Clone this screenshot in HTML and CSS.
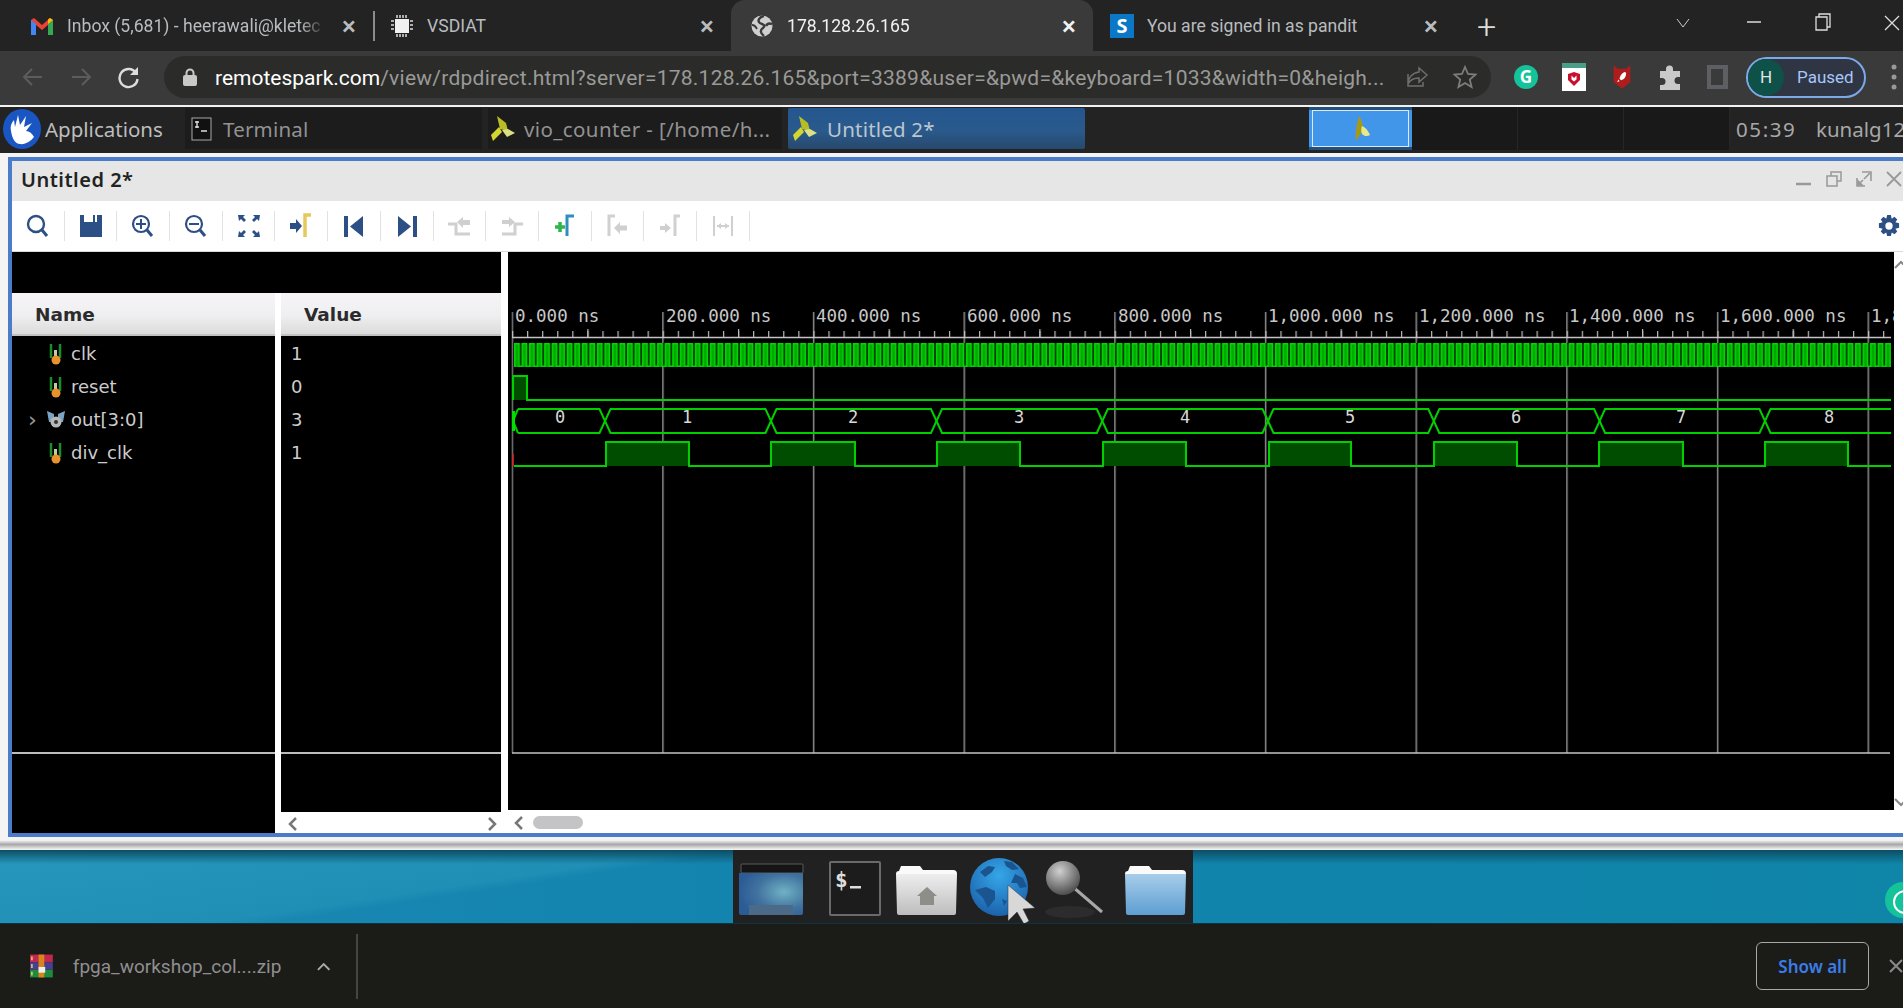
FILE: index.html
```html
<!DOCTYPE html>
<html lang="en">
<head>
    <meta charset="UTF-8">
    <title>178.128.26.165</title>
    <link rel="stylesheet" href="styles.css">
</head>
<body>
    <!-- browser tabs -->
    <div class="tabstrip">
        <div class="tab tab-first">
            <svg class="fav" viewBox="0 0 24 18"><path d="M1 18V3l3-2 8 7 8-7 3 2v15h-5V8l-6 5-6-5v10z" fill="#ea4335"/><path d="M1 18V3l5 4v11z" fill="#4285f4"/><path d="M23 18V3l-5 4v11z" fill="#34a853"/><path d="M18 7l5-4-3-2-2 1.500z" fill="#fbbc04"/></svg>
            <span class="tab-title">Inbox (5,681) - heerawali@kletec</span>
            <span class="tab-close">×</span>
        </div>
        <div class="tab-sep"></div>
        <div class="tab tab-plain">
            <svg class="fav" viewBox="0 0 24 24"><rect x="5" y="5" width="14" height="14" fill="#f1f1f1"/><path d="M7 1v3M10 1v3M13 1v3M16 1v3M7 20v3M10 20v3M13 20v3M16 20v3M1 7h3M1 11h3M1 15h3M20 7h3M20 11h3M20 15h3" stroke="#ddd" stroke-width="1.500"/></svg>
            <span class="tab-title">VSDIAT</span>
            <span class="tab-close">×</span>
        </div>
        <div class="tab tab-first tab-active">
            <svg class="fav" viewBox="0 0 24 24"><circle cx="12" cy="12" r="10.500" fill="#cfcfcf"/><path d="M14 2C9 3 7 7 10 9c4 2 6 2 3 5-3 2-3 5 1 8" fill="none" stroke="#3a3a3a" stroke-width="2.400"/><path d="M22 10c-3-1-5 0-6 2" fill="none" stroke="#3a3a3a" stroke-width="2.400"/><path d="M2 11c3 0 4 2 5 4" fill="none" stroke="#3a3a3a" stroke-width="1.800"/></svg>
            <span class="tab-title">178.128.26.165</span>
            <span class="tab-close">×</span>
        </div>
        <div class="tab tab-plain tab-last">
            <span class="fav-s">S</span>
            <span class="tab-title">You are signed in as pandit</span>
            <span class="tab-close">×</span>
        </div>
        <span class="new-tab">+</span>
        <div class="win-btns">
            <svg class="win-chevron" width="14" height="10" viewBox="0 0 14 10"><path d="M1 1l6 8 6-8" fill="none" stroke="#ccc"/></svg>
            <svg class="win-min" width="14" height="4" viewBox="0 0 14 4"><path d="M0 2h14" stroke="#ddd" stroke-width="1.500"/></svg>
            <svg class="win-restore" width="16" height="18" viewBox="0 0 16 18"><path d="M4 4V1h11v13h-3M1 4h11v13H1z" fill="none" stroke="#ddd" stroke-width="1.300"/></svg>
            <svg class="win-close" width="16" height="16" viewBox="0 0 16 16"><path d="M1 1l14 14M15 1L1 15" stroke="#ddd" stroke-width="1.300"/></svg>
        </div>
    </div>

    <!-- address bar row -->
    <div class="toolbar">
        <svg class="nav" width="24" height="24" viewBox="0 0 24 24"><path d="M21 12H4M11 4l-8 8 8 8" fill="none" stroke="#5c5c5c" stroke-width="2"/></svg>
        <svg class="nav" width="24" height="24" viewBox="0 0 24 24"><path d="M3 12h17M13 4l8 8-8 8" fill="none" stroke="#5c5c5c" stroke-width="2"/></svg>
        <svg class="nav" width="24" height="24" viewBox="0 0 24 24"><path d="M19 8a9 9 0 1 0 1.500 6" fill="none" stroke="#dcdcdc" stroke-width="2.400"/><path d="M21 2v8h-8z" fill="#dcdcdc"/></svg>
        <div class="address">
            <svg class="lock" width="14" height="18" viewBox="0 0 14 18"><rect x="0" y="7" width="14" height="11" rx="2" fill="#c8c8c8"/><path d="M3.500 8V5a3.500 3.500 0 0 1 7 0v3" fill="none" stroke="#c8c8c8" stroke-width="2"/></svg>
            <span class="url"><span class="url-host">remotespark.com</span>/view/rdpdirect.html?server=178.128.26.165&amp;port=3389&amp;user=&amp;pwd=&amp;keyboard=1033&amp;width=0&amp;heigh...</span>
            <svg class="share" width="24" height="24" viewBox="0 0 24 24"><path d="M14 3l8 7-8 7v-4c-5 0-9 2-11 6 0-6 4-11 11-12zM3 9v12h15v-4" fill="none" stroke="#6e6e6e" stroke-width="1.500"/></svg>
            <svg class="star" width="24" height="24" viewBox="0 0 24 24"><path d="M12 2l3 7 7.500.6-5.700 5 1.800 7.400L12 18l-6.600 4 1.800-7.400-5.700-5L9 9z" fill="none" stroke="#7d7d7d" stroke-width="1.800"/></svg>
        </div>
        <span class="ext-grammarly">G</span>
        <svg class="ext" width="24" height="28" viewBox="0 0 24 28"><rect width="24" height="28" fill="#fff"/><rect width="24" height="5" fill="#4a9d86"/><path d="M6 11l6-2 6 2v6l-6 6-6-6z" fill="#c8102e"/><path d="M9.500 12.500v4l2.500 2 2.500-2v-4l-2.500 2.500z" fill="#fff"/></svg>
        <svg class="ext ext-rocket" width="20" height="26" viewBox="0 0 24 30"><path d="M2 1l5 4h10l5-4v20l-10 8-10-8z" fill="#b01c1c"/><path d="M15 9c-3 1-5 4-6 8l2 2c4-1 6-4 6-9zM8 18l-2 3 3-1z" fill="#fff"/></svg>
        <svg class="ext" width="24" height="26" viewBox="0 0 24 26"><path d="M2 7h6V5a3.500 3.500 0 0 1 7 0v2h7v6h-2a3.500 3.500 0 0 0 0 7h2v6H2v-5h2a3.500 3.500 0 0 0 0-7H2z" fill="#c9c9c9"/></svg>
        <svg class="ext" width="24" height="26" viewBox="0 0 24 26"><rect x="1" y="1" width="21" height="24" fill="#5d5f62"/><rect x="5" y="5" width="12" height="16" fill="#3a3a3a"/></svg>
        <div class="profile"><span class="avatar">H</span><span class="paused">Paused</span></div>
        <svg class="dots" width="6" height="26" viewBox="0 0 6 26"><circle cx="3" cy="3" r="2.500" fill="#999"/><circle cx="3" cy="13" r="2.500" fill="#999"/><circle cx="3" cy="23" r="2.500" fill="#999"/></svg>
    </div>

    <!-- remote desktop panel -->
    <div class="panel">
        <svg class="xfce" width="38" height="40" viewBox="0 0 38 40"><ellipse cx="19" cy="20" rx="19" ry="20" fill="#1a55c4"/><path d="M8 22c-1-4 0-8 3-11l1 7 3-12 2 10 6-9-2 11 8-4-6 8c3 0 6 2 8 6-3 4-9 8-14 7-5 0-8-6-9-13z" fill="#fff"/></svg>
        <span class="app-menu">Applications</span>
        <div class="task">
            <svg class="task-term" width="21" height="24" viewBox="0 0 21 24"><rect x="1" y="1" width="19" height="22" fill="#111" stroke="#aaa"/><path d="M4 5h4M6 4v7M4 10h4M10 14h6" stroke="#ddd" stroke-width="1.400"/></svg>
            <span>Terminal</span>
        </div>
        <div class="task task-vio">
            <svg class="vivado" width="26" height="28" viewBox="0 0 26 28"><path d="M7 1l9 7 2 8-8-2z" fill="#b9bd24"/><path d="M9 12l3 5-9 9-2-6z" fill="#d3d62e"/><path d="M12 15l6-1 7 4-8 4z" fill="#dcdf82"/></svg>
            <span>vio_counter - [/home/h...</span>
        </div>
        <div class="task task-active">
            <svg class="vivado" width="26" height="28" viewBox="0 0 26 28"><path d="M7 1l9 7 2 8-8-2z" fill="#b9bd24"/><path d="M9 12l3 5-9 9-2-6z" fill="#d3d62e"/><path d="M12 15l6-1 7 4-8 4z" fill="#dcdf82"/></svg>
            <span>Untitled 2*</span>
        </div>
        <div class="pager">
            <div class="pager-on">
                <svg width="26" height="28" viewBox="0 0 26 28"><path d="M11 1c3 4 4 9 4 14l-7 11c-1-5 0-15 3-25z" fill="#a49a18"/><path d="M14 11c3 1 6 4 8 9-3 2-6 1-8-1-1-3-1-5 0-8z" fill="#e9e98a"/></svg>
            </div>
            <div class="pager-cell"></div>
            <div class="pager-cell"></div>
            <div class="pager-cell"></div>
        </div>
        <span class="clock">05:39</span>
        <span class="user">kunalg12</span>
    </div>

    <!-- desktop with the waveform window -->
    <div class="desktop">
        <div class="window">
            <div class="window-inner">
                <div class="titlebar">
                    <span class="title">Untitled 2*</span>
                    <div class="title-btns">
                        <svg width="16" height="16" viewBox="0 0 16 16"><path d="M0 13h15" stroke="#999" stroke-width="2.500"/></svg>
                        <svg width="16" height="16" viewBox="0 0 16 16"><path d="M5 5V1h10v9h-4M1 5h10v10H1z" fill="none" stroke="#999" stroke-width="1.500"/></svg>
                        <svg width="16" height="16" viewBox="0 0 16 16"><path d="M6 1h9v9M1 7v8h8" fill="none" stroke="#999" stroke-width="1.600"/><path d="M2 14l5-5M2 14v-4l4 4zM14 2l-6 6" stroke="#999" stroke-width="1.600" fill="#999"/></svg>
                        <svg width="16" height="16" viewBox="0 0 16 16"><path d="M1 1l14 14M15 1L1 15" stroke="#999" stroke-width="1.800"/></svg>
                    </div>
                </div>

                <div class="tools">
                    <div class="tool"><svg width="24" height="26" viewBox="0 0 24 26"><circle cx="10" cy="11" r="8" fill="none" stroke="#2c4f85" stroke-width="2.400"/><path d="M16 17l5 6" stroke="#2c4f85" stroke-width="3"/></svg></div>
                    <div class="tool"><svg width="24" height="26" viewBox="0 0 24 26"><path d="M1 2h4v7h9V2h2v7h2V2h5v22H1z" fill="#2c4f85"/></svg></div>
                    <div class="tool"><svg width="24" height="26" viewBox="0 0 24 26"><circle cx="10" cy="11" r="8" fill="none" stroke="#2c4f85" stroke-width="2.200"/><path d="M10 6v10M5 11h10" stroke="#2c4f85" stroke-width="2"/><path d="M16 17l5 6" stroke="#2c4f85" stroke-width="3"/></svg></div>
                    <div class="tool"><svg width="24" height="26" viewBox="0 0 24 26"><circle cx="10" cy="11" r="8" fill="none" stroke="#2c4f85" stroke-width="2.200"/><path d="M5 11h10" stroke="#2c4f85" stroke-width="2"/><path d="M16 17l5 6" stroke="#2c4f85" stroke-width="3"/></svg></div>
                    <div class="tool"><svg width="24" height="26" viewBox="0 0 24 26" fill="#2c4f85"><path d="M1 2h7L6 4l3 3-2 2-3-3-2 2zM23 2h-7l2 2-3 3 2 2 3-3 2 2zM1 24h7l-2-2 3-3-2-2-3 3-2-2zM23 24h-7l2-2-3-3 2-2 3 3 2-2z"/></svg></div>
                    <div class="tool"><svg width="24" height="26" viewBox="0 0 24 26"><path d="M1 10h6V6l6 7-6 7v-4H1z" fill="#2c4f85"/><path d="M22 2h-6v22" fill="none" stroke="#e6c95c" stroke-width="3.500"/></svg></div>
                    <div class="tool"><svg width="24" height="26" viewBox="0 0 24 26" fill="#2c4f85"><rect x="2" y="3" width="4" height="21"/><path d="M21 3v21L8 13.500z"/></svg></div>
                    <div class="tool"><svg width="24" height="26" viewBox="0 0 24 26" fill="#2c4f85"><rect x="18" y="3" width="4" height="21"/><path d="M3 3v21l13-10.500z"/></svg></div>
                    <div class="tool"><svg width="24" height="26" viewBox="0 0 24 26"><path d="M1 11H9V21H23" fill="none" stroke="#d0d0d0" stroke-width="3"/><path d="M10 9l6-5v3h7v5h-7v3z" fill="#cfcfcf"/></svg></div>
                    <div class="tool"><svg width="24" height="26" viewBox="0 0 24 26"><path d="M2 21H15V11H23" fill="none" stroke="#d0d0d0" stroke-width="3"/><path d="M2 7h7V4l6 5-6 5v-3H2z" fill="#cfcfcf"/></svg></div>
                    <div class="tool"><svg width="24" height="26" viewBox="0 0 24 26"><path d="M2 14h10M7 9v10" stroke="#2fb54a" stroke-width="3.500"/><path d="M21 3h-7v20" fill="none" stroke="#2f8dc0" stroke-width="3"/></svg></div>
                    <div class="tool"><svg width="24" height="26" viewBox="0 0 24 26"><path d="M10 3H4v20" fill="none" stroke="#d0d0d0" stroke-width="3"/><path d="M9 15l6-6v3.500h7v5h-7V21z" fill="#cfcfcf"/></svg></div>
                    <div class="tool"><svg width="24" height="26" viewBox="0 0 24 26"><path d="M22 3H17V23" fill="none" stroke="#d0d0d0" stroke-width="3"/><path d="M2 13h5V10l6 5-6 5v-3H2z" fill="#cfcfcf"/></svg></div>
                    <div class="tool"><svg width="24" height="26" viewBox="0 0 24 26"><path d="M3 3v20M21 3v20M6 13h12" stroke="#d0d0d0" stroke-width="2"/><path d="M6 13l4-3v6zM18 13l-4-3v6z" fill="#d0d0d0"/></svg></div>
                    <svg class="gear" width="22" height="24" viewBox="0 0 24 24"><path fill="#2c4f85" fill-rule="evenodd" d="M10 0h4l1 4 3-2 3 3-2 3 4 1v5l-4 1 2 3-3 3-3-2-1 4h-4l-1-4-3 2-3-3 2-3-4-1V9l4-1-2-3 3-3 3 2zM12 8a4 4 0 1 0 0 8 4 4 0 0 0 0-8z"/></svg>
                </div>

                <div class="panes">
                    <div class="name-pane">
                        <div class="pane-top pane-top-join"></div>
                        <div class="col-head col-name">Name</div>
                        <div class="rows">
                            <div class="row"><svg class="sig" width="16" height="24" viewBox="0 0 16 24"><path d="M3 2v14M12 2v14" stroke="#1e8a2e" stroke-width="2.500"/><path d="M6 8h3v8H6z" fill="#c9c9a0"/><circle cx="8" cy="18" r="4.500" fill="#e8912d"/></svg>clk</div>
                            <div class="row"><svg class="sig" width="16" height="24" viewBox="0 0 16 24"><path d="M3 2v14M12 2v14" stroke="#1e8a2e" stroke-width="2.500"/><path d="M6 8h3v8H6z" fill="#c9c9a0"/><circle cx="8" cy="18" r="4.500" fill="#e8912d"/></svg>reset</div>
                            <div class="row row-bus"><span class="expander">›</span><svg class="sig" width="20" height="20" viewBox="0 0 20 20"><path d="M1 1l7 3v8H3zM19 1l-7 3v8h5z" fill="#7da3c4"/><circle cx="10" cy="12" r="5.500" fill="#b8b8b8"/><circle cx="10" cy="12" r="2" fill="#333"/></svg>out[3:0]</div>
                            <div class="row"><svg class="sig" width="16" height="24" viewBox="0 0 16 24"><path d="M3 2v14M12 2v14" stroke="#1e8a2e" stroke-width="2.500"/><path d="M6 8h3v8H6z" fill="#c9c9a0"/><circle cx="8" cy="18" r="4.500" fill="#e8912d"/></svg>div_clk</div>
                        </div>
                        <div class="pane-rule"></div>
                    </div>

                    <div class="value-pane">
                        <div class="value-black">
                            <div class="pane-top"></div>
                            <div class="col-head col-value">Value</div>
                            <div class="rows">
                                <div class="row">1</div>
                                <div class="row">0</div>
                                <div class="row">3</div>
                                <div class="row">1</div>
                            </div>
                            <div class="pane-rule pane-rule-short"></div>
                        </div>
                        <div class="hscroll">
                            <svg width="12" height="16" viewBox="0 0 12 16"><path d="M9 2L3 8l6 6" fill="none" stroke="#777" stroke-width="2.500"/></svg>
                            <svg width="12" height="16" viewBox="0 0 12 16"><path d="M3 2l6 6-6 6" fill="none" stroke="#777" stroke-width="2.500"/></svg>
                        </div>
                    </div>

                    <div class="wave-pane">
                        <svg class="wave" width="1386" height="558" viewBox="508 252 1386 558">
                            <defs>
                                <pattern id="grid" patternUnits="userSpaceOnUse" x="511.5" y="0" width="150.67" height="10"><rect width="1.500" height="10" fill="#8c8c8c"/></pattern>
                                <pattern id="minor" patternUnits="userSpaceOnUse" x="512" y="331" width="15.067" height="6"><rect width="1.200" height="6" fill="#bdbdbd"/></pattern>
                                <pattern id="mid" patternUnits="userSpaceOnUse" x="587.3" y="329" width="150.67" height="8"><rect width="1.200" height="8" fill="#bdbdbd"/></pattern>
                                <pattern id="clock" patternUnits="userSpaceOnUse" x="514" y="343" width="7.534" height="24">
                                    <rect width="7.534" height="23" fill="#003a00"/>
                                    <rect width="5.200" height="24" fill="#00a800"/>
                                    <path d="M0 23.200H0.800V0.800H5V23.200H7.534" fill="none" stroke="#00d800" stroke-width="1.500"/>
                                </pattern>
                            </defs>
                            <rect x="511.500" y="312" width="1380" height="441" fill="url(#grid)"/>
                            <rect x="512" y="331" width="1379" height="6" fill="url(#minor)"/>
                            <rect x="512" y="329" width="1379" height="8" fill="url(#mid)"/>
                            <path d="M512 337.500H1891M512 753H1890" stroke="#c4c4c4" stroke-width="1.500"/>
                            <g class="ruler">
                                <text x="515" y="322">0.000 ns</text>
                                <text x="666" y="322">200.000 ns</text>
                                <text x="816" y="322">400.000 ns</text>
                                <text x="967" y="322">600.000 ns</text>
                                <text x="1118" y="322">800.000 ns</text>
                                <text x="1268" y="322">1,000.000 ns</text>
                                <text x="1419" y="322">1,200.000 ns</text>
                                <text x="1569" y="322">1,400.000 ns</text>
                                <text x="1720" y="322">1,600.000 ns</text>
                                <text x="1871" y="322">1,800.000 ns</text>
                            </g>
                            <rect x="514" y="343" width="1377" height="24" fill="url(#clock)"/>
                            <path class="trace" d="M513 400V376H527V400H1891" fill="#004d00"/>
                            <path class="trace" fill="none" d="M518 409H599.500L610.500 433H765.500L776.500 409H931L942 433H1096.800L1107.800 409H1262.500L1273.500 433H1428.300L1439.300 409H1594.100L1605.100 433H1759.500L1770.500 409H1891"/>
                            <path class="trace" fill="none" d="M518 433H599.500L610.500 409H765.500L776.500 433H931L942 409H1096.800L1107.800 433H1262.500L1273.500 409H1428.300L1439.300 433H1594.100L1605.100 409H1759.500L1770.500 433H1891"/>
                            <path class="trace" fill="none" d="M518 409L513 421L518 433"/>
                            <rect x="512" y="411" width="3" height="20" fill="#00e000"/>
                            <g class="bus-value">
                                <text x="560" y="423">0</text>
                                <text x="687" y="423">1</text>
                                <text x="853" y="423">2</text>
                                <text x="1019" y="423">3</text>
                                <text x="1185" y="423">4</text>
                                <text x="1350" y="423">5</text>
                                <text x="1516" y="423">6</text>
                                <text x="1681" y="423">7</text>
                                <text x="1829" y="423">8</text>
                            </g>
                            <path class="trace" fill="#004d00" d="M514 466H606V442H689V466H771V442H855V466H937V442H1020V466H1103V442H1186V466H1269V442H1351V466H1434V442H1517V466H1599V442H1683V466H1765V442H1848V466H1891"/>
                            <path d="M513 454V466" stroke="#e02020" stroke-width="1.500"/>
                        </svg>
                        <div class="hscroll hscroll-wave">
                            <svg width="12" height="16" viewBox="0 0 12 16"><path d="M9 2L3 8l6 6" fill="none" stroke="#777" stroke-width="2.500"/></svg>
                            <span class="thumb"></span>
                        </div>
                    </div>

                    <div class="vscroll">
                        <svg width="9" height="12" viewBox="0 0 9 12"><path d="M1 8l6-6 6 6" fill="none" stroke="#888" stroke-width="2"/></svg>
                        <svg width="9" height="12" viewBox="0 0 9 12"><path d="M1 2l6 6 6-6" fill="none" stroke="#888" stroke-width="2"/></svg>
                    </div>
                </div>
            </div>
        </div>

        <div class="desk-strip">
            <svg class="dock" width="460" height="73" viewBox="0 0 460 73">
                <defs>
                    <radialGradient id="winBlue" cx="0.7" cy="0.45" r="0.7"><stop offset="0" stop-color="#6fb2c4"/><stop offset="0.6" stop-color="#41729f"/><stop offset="1" stop-color="#2c5c96"/></radialGradient>
                    <linearGradient id="folderBlue" x1="0" y1="0" x2="0" y2="1"><stop offset="0" stop-color="#a7cdea"/><stop offset="1" stop-color="#5e9ed2"/></linearGradient>
                    <linearGradient id="folderGrey" x1="0" y1="0" x2="0" y2="1"><stop offset="0" stop-color="#eee"/><stop offset="1" stop-color="#bdbdbd"/></linearGradient>
                    <radialGradient id="globeBlue" cx="0.5" cy="0.3" r="0.75"><stop offset="0" stop-color="#35a6e8"/><stop offset="1" stop-color="#1a5ea8"/></radialGradient>
                    <radialGradient id="lensGrey" cx="0.4" cy="0.3" r="0.8"><stop offset="0" stop-color="#d0d0d0"/><stop offset="1" stop-color="#3c3c3c"/></radialGradient>
                </defs>
                <!-- show desktop -->
                <rect x="8" y="14" width="62" height="9" rx="1" fill="#151515" stroke="#5a5a5a"/>
                <path d="M6 23H70L70 63Q70 65 68 65H8Q6 65 6 63z" fill="url(#winBlue)"/>
                <rect x="16" y="55" width="44" height="10" fill="#4b6a88"/>
                <!-- terminal -->
                <rect x="97" y="12" width="50" height="53" rx="1" fill="#1c1c1c" stroke="#6a6a6a" stroke-width="2"/>
                <text class="dock-term" x="102" y="37">$</text>
                <rect x="117" y="36" width="11" height="2.500" fill="#ddd"/>
                <!-- home -->
                <path d="M163 24Q163 21 166 21L168 16H187L190 20H220Q224 20 224 24z" fill="#fafafa"/>
                <path d="M163 24H224L223 63Q223 65 221 65H166Q164 65 164 63z" fill="url(#folderGrey)"/>
                <path d="M184 46L194 37 204 46H201V55H187V46z" fill="#8d8d8a"/>
                <!-- globe -->
                <circle cx="266" cy="37" r="29" fill="url(#globeBlue)"/>
                <path d="M247 22l8-6 7 1-3 5-7 5zM271 11l8 1 7 7-7 1-6-4zM282 24l8 4 4 9-7 1-3-5-6 0zM242 40l11-3 9 4 0 8-7 9-5-10zM269 49l5 2-3 5z" fill="#1a5590"/>
                <path d="M275 35l0 36 9-9 7 12 5-3-6-12 12-1z" fill="#d8d8d8" stroke="#333" stroke-width="0.500"/>
                <!-- search -->
                <ellipse cx="337" cy="62" rx="25" ry="6" fill="#2c2c2c"/>
                <path d="M340 37l29 25" stroke="#a8a8a8" stroke-width="3"/>
                <circle cx="330" cy="28" r="17" fill="url(#lensGrey)"/>
                <!-- files -->
                <path d="M392 24Q392 21 395 21L397 16H416L419 20H449Q453 20 453 24z" fill="#fafafa"/>
                <path d="M392 24H453L452 63Q452 65 450 65H395Q393 65 393 63z" fill="url(#folderBlue)"/>
            </svg>
            <div class="grammarly-dot"></div>
        </div>
    </div>

    <!-- downloads -->
    <div class="downloads">
        <svg class="rar" width="24" height="24" viewBox="0 0 24 24"><rect y="0" width="24" height="8" fill="#c2274d"/><rect y="8" width="24" height="8" fill="#46408f"/><rect y="16" width="24" height="8" fill="#1e8a3a"/><rect x="9" y="0" width="6" height="24" fill="#d8851c"/><path d="M2 2v4M2 10v4M2 18v4" stroke="#f1d37a" stroke-width="1.500"/><rect x="9" y="13" width="7" height="6" fill="#eee"/></svg>
        <span class="dl-name">fpga_workshop_col....zip</span>
        <svg class="dl-arrow" width="14" height="9" viewBox="0 0 14 9"><path d="M1 8l6-6 6 6" fill="none" stroke="#aaa" stroke-width="2"/></svg>
        <div class="dl-sep"></div>
        <button class="show-all">Show all</button>
        <svg class="dl-close" width="14" height="14" viewBox="0 0 14 14"><path d="M1 1l12 12M13 1L1 13" stroke="#8a8a8a" stroke-width="2"/></svg>
    </div>
</body>
</html>
```

FILE: styles.css
```css
* {
    box-sizing: border-box;
}
html, body {
    margin: 0;
    height: 100%;
}
body {
    width: 1903px;
    height: 1008px;
    overflow: hidden;
    display: flex;
    flex-direction: column;
    font-family: "Noto Sans", sans-serif;
    background: #222;
}

/* tabs */
.tabstrip {
    flex: 0 0 51px;
    display: flex;
    align-items: center;
    padding-left: 11px;
    background: #232323;
    font-family: Roboto, sans-serif;
    font-size: 17.600px;
    color: #b9bcbf;
}
.tab {
    height: 51px;
    display: flex;
    align-items: center;
    gap: 13px;
    padding-right: 14px;
}
.tab-first {
    width: 362px;
    padding-left: 19px;
}
.tab-plain {
    width: 356px;
    padding-left: 15px;
}
.tab-last {
    width: 362px;
    padding-left: 17px;
}
.tab-active {
    background: #3a3a3a;
    border-radius: 14px 14px 0 0;
    color: #f1f1f1;
}
.tab-sep {
    width: 2px;
    height: 30px;
    background: #8c8c8c;
}
.fav {
    flex: 0 0 24px;
    height: 24px;
}
.fav-s {
    flex: 0 0 24px;
    height: 24px;
    background: #0a78c6;
    color: #fff;
    font: bold 20px/24px "Noto Sans", sans-serif;
    text-align: center;
}
.tab-title {
    flex: 1;
    min-width: 0;
    white-space: nowrap;
    overflow: hidden;
}
.tab-first .tab-title {
    -webkit-mask-image: linear-gradient(90deg, #000 90%, transparent);
}
.tab-close {
    flex: 0 0 20px;
    text-align: center;
    font-size: 26px;
    font-weight: 500;
    line-height: 26px;
}
.new-tab {
    margin-left: 22px;
    font-size: 34px;
    font-weight: 300;
    line-height: 34px;
    color: #ddd;
}
.win-btns {
    position: relative;
    flex: 1;
    height: 51px;
}
.win-btns svg {
    position: absolute;
    top: 18px;
}
.win-chevron { left: 180px; }
.win-min { left: 251px; top: 20px !important; }
.win-restore { left: 319px; top: 13px !important; }
.win-close { left: 388px; top: 15px !important; }

/* address row */
.toolbar {
    flex: 0 0 56px;
    display: flex;
    align-items: center;
    padding: 0 0 2px 21px;
    background: #3a3a3a;
    border-bottom: 2px solid #f2f2f2;
}
.nav {
    margin-right: 24px;
}
.address {
    flex: 0 0 1327px;
    height: 42px;
    margin-left: -1px;
    margin-right: 23px;
    padding-left: 19px;
    display: flex;
    align-items: center;
    border-radius: 21px;
    background: #2b2c29;
    font-family: Roboto, sans-serif;
    font-size: 21px;
    color: #9a9a98;
}
.lock {
    margin-right: 18px;
}
.url {
    width: 1170px;
    padding-top: 2px;
    letter-spacing: 0.250px;
    white-space: nowrap;
    overflow: hidden;
}
.url-host {
    color: #fff;
    letter-spacing: 0;
}
.share {
    margin-left: 20px;
}
.star {
    margin-left: 24px;
}
.ext-grammarly {
    flex: 0 0 24px;
    height: 24px;
    margin-right: 24px;
    border-radius: 50%;
    background: #15c39a;
    color: #fff;
    font: bold 17px/24px "Noto Sans", sans-serif;
    text-align: center;
}
.ext {
    margin-right: 24px;
}
.ext-rocket {
    margin-left: 2px;
    margin-right: 26px;
}
.profile {
    flex: 0 0 120px;
    height: 41px;
    margin-left: -8px;
    display: flex;
    align-items: center;
    border: 2px solid #7ca9e8;
    border-radius: 21px;
    background: #2f3542;
    font-family: Roboto, sans-serif;
}
.avatar {
    flex: 0 0 36px;
    height: 37px;
    border-radius: 50%;
    background: #0e5148;
    color: #e4e4e4;
    font-size: 17px;
    line-height: 37px;
    text-align: center;
}
.paused {
    margin-left: 13px;
    font-size: 17px;
    color: #a8c7fa;
}
.dots {
    margin-left: 25px;
}

/* xfce panel */
.panel {
    flex: 0 0 46px;
    display: flex;
    align-items: center;
    padding: 0 0 3px 3px;
    background: #232323;
    font-size: 20.500px;
    color: #929292;
}
.panel > * {
    flex: none;
}
.app-menu {
    width: 140px;
    margin-left: 4px;
    color: #bdbdbd;
}
.task {
    width: 297px;
    height: 41px;
    margin-right: 6px;
    padding-left: 6px;
    display: flex;
    align-items: center;
    gap: 11px;
    background: #1c1c1c;
    white-space: nowrap;
    letter-spacing: 0.200px;
}
.task-vio {
    width: 294px;
    gap: 8px;
    padding-left: 2px;
    letter-spacing: 0.400px;
}
.task-active {
    margin-right: 224px;
    padding-left: 4px;
    gap: 9px;
    border-radius: 2px;
    background: linear-gradient(#24568f, #2a5a8c 55%, #27496d);
    color: #bcc6d0;
}
.pager {
    display: flex;
    height: 43px;
    background: #191919;
}
.pager-on {
    width: 103px;
    display: flex;
    align-items: center;
    justify-content: center;
    background: #4296ea;
    border: solid #22517f;
    border-width: 3px 0;
    outline: 1px solid #dfe9f2;
    outline-offset: -4px;
}
.pager-cell {
    width: 106px;
    border-right: 1px solid #262626;
}
.clock {
    margin-left: 6px;
    width: 80px;
    letter-spacing: 1.600px;
    color: #a8a8a8;
}
.user {
    color: #a8a8a8;
    white-space: nowrap;
}

/* desktop */
.desktop {
    flex: 1;
    min-height: 0;
    display: flex;
    flex-direction: column;
}
.window {
    flex: 0 0 697px;
    padding: 4px 0 13px 8px;
    background: linear-gradient(#f4f4f4 98.600%, #a8a8a8 99.200%, #f0f0f0 99.900%);
}
.window-inner {
    height: 680px;
    display: flex;
    flex-direction: column;
    border: solid #4a7cc9;
    border-width: 4px 0 4px 4px;
    background: #fff;
}
.titlebar {
    flex: 0 0 40px;
    display: flex;
    align-items: center;
    padding: 0 0 4px 9px;
    background: #e6e6e6;
}
.title {
    font-size: 20px;
    font-weight: 600;
    letter-spacing: 0.500px;
    color: #222;
}
.title-btns {
    margin-left: auto;
    margin-right: 1px;
    display: flex;
    gap: 14px;
}
.tools {
    flex: 0 0 51px;
    display: flex;
    align-items: center;
    border-bottom: 1px solid #d9d9d9;
}
.tool {
    width: 52.700px;
    height: 30px;
    display: flex;
    align-items: center;
    justify-content: center;
    border-right: 1px solid #e2e2e2;
}
.gear {
    margin-left: auto;
    margin-right: 3px;
}
.panes {
    flex: 1;
    min-height: 0;
    display: flex;
    background: #fff;
    font-size: 18px;
    color: #ccc;
}
.name-pane {
    flex: 0 0 263px;
    background: #000;
    display: flex;
    flex-direction: column;
    margin-right: 6px;
    font-family: "DejaVu Sans", sans-serif;
}
.value-pane {
    flex: 0 0 220px;
    margin-right: 7px;
    display: flex;
    flex-direction: column;
    font-family: "DejaVu Sans", sans-serif;
}
.value-black {
    flex: 0 0 560px;
    background: #000;
    display: flex;
    flex-direction: column;
}
.pane-top {
    flex: 0 0 41px;
}
.pane-top-join {
    margin-right: -6px;
    background: #000;
}
.col-head {
    flex: 0 0 43px;
    display: flex;
    align-items: center;
    padding-top: 2px;
    font-size: 18.500px;
    font-weight: bold;
    color: #2b2b2b;
    background: linear-gradient(#f6f4f7, #efeef0 55%, #dcdcdc);
    border-bottom: 2px solid #c2c2c2;
}
.col-name {
    padding-left: 23px;
}
.col-value {
    padding-left: 23px;
}
.rows {
    flex: 0 0 416px;
    padding-top: 1px;
}
.row {
    height: 33px;
    display: flex;
    align-items: center;
    padding-left: 10px;
    white-space: nowrap;
}
.name-pane .row {
    padding-left: 36px;
}
.name-pane .row-bus {
    padding-left: 16px;
}
.sig {
    margin-right: 7px;
    flex: none;
}
.expander {
    width: 19px;
    font-size: 22px;
    line-height: 22px;
    color: #999;
}
.row-bus .sig {
    margin-right: 5px;
    margin-left: -1px;
}
.pane-rule {
    height: 2px;
    background: #bdbdbd;
}
.pane-rule-short {
    flex: none;
}
.hscroll {
    flex: 1;
    display: flex;
    align-items: center;
    justify-content: space-between;
    padding: 2px 3px 0 6px;
    background: #fff;
}
.hscroll-wave {
    justify-content: flex-start;
    padding-left: 5px;
    gap: 8px;
}
.thumb {
    width: 50px;
    height: 13px;
    border-radius: 7px;
    background: #c4c4c6;
}
.wave-pane {
    flex: 0 0 1386px;
    display: flex;
    flex-direction: column;
}
.wave {
    display: block;
    flex: none;
    background: #000;
}
.ruler text {
    font: 17.500px "DejaVu Sans Mono", monospace;
    fill: #c8c8c8;
}
.bus-value text {
    font: 17px "DejaVu Sans Mono", monospace;
    fill: #d8d8d8;
    text-anchor: middle;
}
.trace {
    stroke: #00cf00;
    stroke-width: 2;
}
.vscroll {
    flex: 1;
    display: flex;
    flex-direction: column;
    justify-content: space-between;
    padding: 8px 0 24px;
    background: #fff;
}

/* strip of wallpaper below the window */
.desk-strip {
    position: relative;
    flex: 1;
    padding-left: 733px;
    background:
        linear-gradient(#0d4d62, rgba(13, 77, 98, 0) 14px),
        linear-gradient(171.400deg, #2797bc 0, #1f8fb6 29%, rgba(31, 143, 182, 0) 31.500%),
        linear-gradient(90deg, #1a8ab2, #1283ae 45%, #0f85a8);
}
.dock {
    display: block;
    background: #212121;
}
.dock-term {
    font: bold 21px "DejaVu Sans Mono", monospace;
    fill: #ddd;
}
.grammarly-dot {
    position: absolute;
    right: -18px;
    top: 32px;
    width: 36px;
    height: 36px;
    padding: 8px;
    border-radius: 50%;
    background: #15c39a;
}
.grammarly-dot::after {
    content: "";
    display: block;
    width: 20px;
    height: 20px;
    border: 2px solid #fff;
    border-radius: 50%;
}

/* downloads */
.downloads {
    flex: 0 0 85px;
    display: flex;
    align-items: center;
    padding-left: 30px;
    background: #1b1b18;
    border-top: 1px solid #0c3442;
    font-family: Roboto, sans-serif;
}
.dl-name {
    width: 208px;
    margin-left: 20px;
    font-size: 19px;
    color: #8f8f8f;
    white-space: nowrap;
}
.dl-arrow {
    margin-left: 36px;
}
.dl-sep {
    width: 2px;
    height: 65px;
    margin-left: 26px;
    background: #454545;
}
.show-all {
    width: 118px;
    height: 48px;
    margin-left: 1398px;
    border: 1.500px solid #a8a8a8;
    border-radius: 6px;
    background: none;
    color: #3b7de8;
    font-family: "Noto Sans", sans-serif;
    font-size: 17px;
    font-weight: 600;
}
.dl-close {
    margin-left: 20px;
    flex: none;
}
```
